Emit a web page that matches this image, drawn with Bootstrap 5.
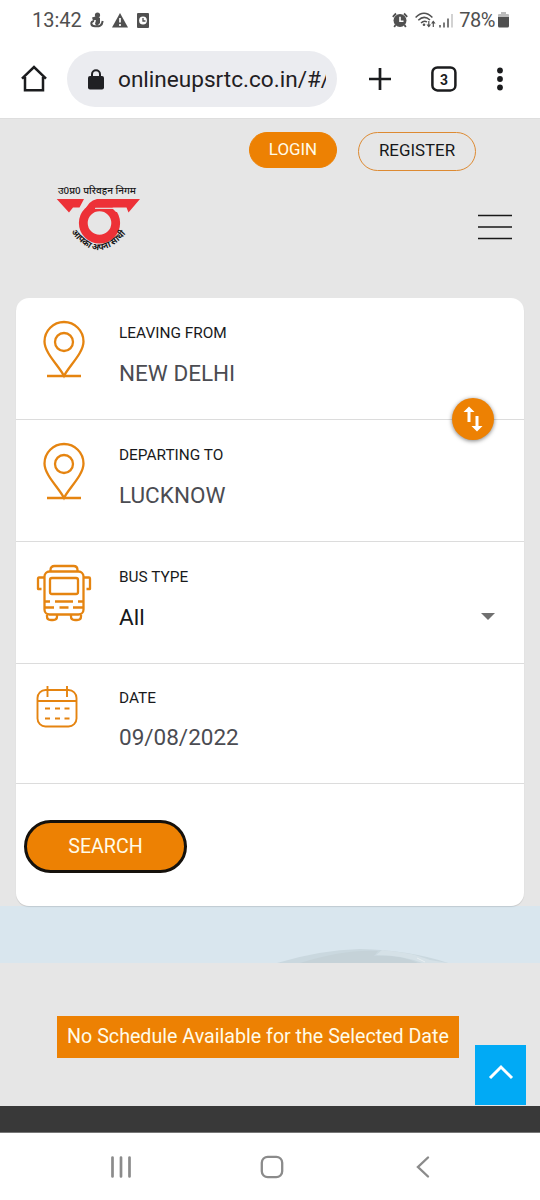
<!DOCTYPE html>
<html lang="en">
<head>
<meta charset="utf-8">
<meta name="viewport" content="width=device-width, initial-scale=1">
<title>UPSRTC Online Booking</title>
<link href="https://cdn.jsdelivr.net/npm/bootstrap@5.3.0/dist/css/bootstrap.min.css" rel="stylesheet">
<style>
  :root { --brand: #ed8103; --page: #e6e6e6; }
  body { font-family: Roboto, "Noto Sans", sans-serif; color: #191a1c; background: #fff; }
  svg { display: block; flex: none; overflow: visible; }
  .status-bar { height: 40px; padding-left: 32px; padding-right: 30px; font-size: 20px; line-height: 24px; color: #505050; }
  .browser-bar { height: 78px; padding-left: 20px; padding-right: 20px; }
  .address { width: 270px; height: 56px; margin-left: 19px; background: #ebecf0; padding-left: 20px; }
  .address-text { width: 208px; margin-left: 13px; padding-top: 2px; font-size: 22.6px; line-height: 30px; white-space: nowrap; overflow: hidden; color: #1f2023; }
  .page-body { height: 988px; background: var(--page); border-top: 1px solid #dedede; }
  .account-links { height: 54px; padding: 13px 64px 0 0; gap: 21px; }
  .pill-btn { --bs-btn-border-radius: 30px; --bs-btn-padding-x: 0; --bs-btn-padding-y: 0; font-size: 16.9px; border-width: 1px; }
  .login-btn { width: 88px; height: 36px; background: var(--brand); border-color: var(--brand); color: #fffbe8; padding-bottom: 1px; }
  .register-btn { width: 118px; height: 39px; border-color: #dd8a32; color: #17181a; padding-bottom: 1px; }
  .site-head { height: 125px; padding: 9px 28px 0 54px; }
  .booking { width: 508px; height: 608px; margin-left: 16px; border-radius: 13px; background: #fff; position: relative; z-index: 1; box-shadow: 0 1px 1px rgba(0,0,0,.12); }
  .field { height: 122px; border-bottom: 1px solid #dcdcdc; }
  .field-date { height: 120px; }
  .field-icon { width: 103px; padding-left: 20px; padding-top: 22px; }
  .field-label { font-size: 15.4px; line-height: 20px; margin-top: 25px; }
  .field-value { font-size: 22.5px; line-height: 30px; margin-top: 15px; color: #4b4c52; }
  .swap { position: absolute; left: 436px; top: 100px; width: 42px; height: 42px; background: var(--brand); box-shadow: 0 1px 4px rgba(0,0,0,.5); }
  .search-btn { width: 163px; height: 53px; margin: 36px 0 0 8px; --bs-btn-border-radius: 27px; border: 3px solid #15110c; background: var(--brand); color: #fffbe8; font-size: 19.6px; padding: 0; }
  .banner { height: 57px; background: #d9e6ee; }
  .message-area { height: 142px; padding-top: 53px; position: relative; }
  .message { width: 402px; height: 42px; margin-left: 57px; font-size: 19.65px; background: var(--brand); color: #fffbe8; white-space: nowrap; }
  .to-top { position: absolute; right: 14px; bottom: 0; width: 51px; height: 60px; background: #01aaf5; }
  .footer-strip { height: 27px; background: #393939; border-bottom: 1px solid #777; }
  .system-nav { height: 67px; }
</style>
</head>
<body>
<div class="status-bar d-flex align-items-center">
  <span>13:42</span>
  <svg width="14" height="16" viewBox="0 0 14 16" style="margin-left:8px"><g fill="#505050"><circle cx="7.500" cy="3" r="2.600"/><path d="M2 5.500l5-1.500 3 2v5L7 14l-2-2 1-4-3 .5z"/></g><path d="M4 9C0 9.500.5 14 5 14.300S12 14 12.700 9" fill="none" stroke="#505050" stroke-width="2"/></svg>
  <svg width="16" height="15" viewBox="0 0 16 15" style="margin-left:8px"><path d="M8 0l8 14.500H0z" fill="#505050"/><path d="M8 5v4.500M8 11v2" stroke="#fff" stroke-width="1.700"/></svg>
  <svg width="12" height="15" viewBox="0 0 12 15" style="margin-left:9px"><rect width="12" height="15" rx="1" fill="#505050"/><circle cx="6" cy="7.500" r="3.900" fill="#fff"/><path d="M6 5v3h2.500" fill="none" stroke="#505050" stroke-width="1.300"/></svg>
  <svg class="ms-auto" width="16" height="16" viewBox="0 0 16 16"><circle cx="8" cy="8.500" r="6.500" fill="#505050"/><path d="M.8 4.800L4 1.500M15.200 4.800L12 1.500M3.500 13l-1.300 2M12.500 13l1.300 2" stroke="#505050" stroke-width="1.800"/><path d="M8 4.800v4.500h3.500" fill="none" stroke="#fff" stroke-width="1.600"/></svg>
  <svg width="21" height="17" viewBox="0 0 21 17" style="margin-left:7px"><g fill="none" stroke="#505050" stroke-width="1.500"><path d="M.6 5.500Q9 -3 17.400 5.500M3.300 8.300Q9 2.600 15 8M6 11Q9 8 12 10"/><path d="M13.800 9v5.500M18.300 15V9.500" stroke-width="1.200"/></g><circle cx="9" cy="12.800" r="1.300" fill="#505050"/><path d="M11.500 12.500h4.600l-2.300 3zM16 11.500h4.600l-2.300-3z" fill="#505050"/></svg>
  <svg width="14" height="15" viewBox="0 0 14 15" style="margin-left:3px"><path d="M1 12v2.500M5 9.500v5M9 5.500v9" stroke="#505050" stroke-width="1.500"/><path d="M13 1v13.500" stroke="#c3c3c3" stroke-width="1.500"/></svg>
  <span style="margin-left:6px;letter-spacing:-.5px">78%</span>
  <svg width="11" height="16" viewBox="0 0 11 16" style="margin-left:3px;margin-right:1px"><path d="M0 3q0-1 1-1h2V0h5v2h2q1 0 1 1v3H0z" fill="#bcbcbc"/><path d="M0 5h11v9q0 1.500-1.500 1.500h-8Q0 15.500 0 14z" fill="#505050"/></svg>
</div>

<header class="browser-bar d-flex align-items-center">
  <svg width="28" height="28" viewBox="0 0 28 28"><path d="M2 13.700L14 2l12 11.700M5 12v13.200h18V12" fill="none" stroke="#1b1c1e" stroke-width="2.500"/></svg>
  <div class="address rounded-pill d-flex align-items-center">
    <svg width="18" height="21" viewBox="0 0 18 21"><rect x="1" y="7" width="16" height="13.500" rx="2" fill="#202124"/><path d="M5 8V5.200a4 4 0 018 0V8" fill="none" stroke="#202124" stroke-width="2"/></svg>
    <div class="address-text">onlineupsrtc.co.in/#/</div>
  </div>
  <svg width="24" height="24" viewBox="0 0 24 24" style="margin-left:31px"><path d="M12 1v22M1 12h22" stroke="#1b1c1e" stroke-width="2.700"/></svg>
  <svg width="26" height="26" viewBox="0 0 26 26" style="margin-left:39px"><rect x="1.400" y="1.400" width="23" height="23" rx="5" fill="none" stroke="#1b1c1e" stroke-width="2.500"/><text x="13" y="18.500" text-anchor="middle" font-size="15.500" font-weight="700" font-family="Roboto, sans-serif" textLength="8" lengthAdjust="spacingAndGlyphs" fill="#1b1c1e">3</text></svg>
  <svg width="6" height="24" viewBox="0 0 6 24" style="margin-left:40px" fill="#1b1c1e"><circle cx="3" cy="3.500" r="2.900"/><circle cx="3" cy="12" r="2.900"/><circle cx="3" cy="20.500" r="2.900"/></svg>
</header>

<main class="page-body">
  <nav class="account-links d-flex justify-content-end align-items-start">
    <button class="btn pill-btn login-btn">LOGIN</button>
    <button class="btn pill-btn register-btn">REGISTER</button>
  </nav>
  <div class="site-head d-flex align-items-start justify-content-between">
    <svg width="90" height="72" viewBox="0 0 90 72" font-family="'Noto Sans Devanagari','Noto Sans',sans-serif" fill="#171717">
      <text x="4" y="11.500" font-size="9.700" font-weight="500" textLength="78" lengthAdjust="spacingAndGlyphs">उ0प्र0 परिवहन निगम</text>
      <circle cx="45.500" cy="41" r="16.200" fill="none" stroke="#ed3137" stroke-width="8.800"/>
      <path d="M41 26.200H72" stroke="#e6e6e6" stroke-width="1.400"/>
      <g fill="#ed3137"><path d="M2.700 17H30L25.500 25.500H19L15 30.500Z"/><path d="M43 17H86L74.500 30.500L72.500 25.500H42L31 29Q34 19 43 17Z"/></g>
      <path d="M58 25.900H70L67 30H62Z" fill="#e6e6e6"/>
      <path id="motto" d="M17 50Q44 86 73 50" fill="none"/>
      <text font-size="9" font-weight="700"><textPath href="#motto" textLength="67" lengthAdjust="spacingAndGlyphs">आपका अपना साथी</textPath></text>
    </svg>
    <svg width="34" height="26" viewBox="0 0 34 26" style="margin-top:32px"><path d="M0 1.500h34M0 13h34M0 24.500h34" stroke="#191919" stroke-width="1.400"/></svg>
  </div>

  <section class="booking">
    <div class="field d-flex">
      <div class="field-icon"><svg width="56" height="58" viewBox="0 0 56 58" fill="none" stroke="#e58410" stroke-width="2.300"><path d="M28 56C23 46 8.500 33 8.500 21.500a19.500 19.500 0 0139 0C47.500 33 33 46 28 56ZM11 56h34"/><circle cx="28" cy="22" r="9"/></svg></div>
      <div><div class="field-label">LEAVING FROM</div><div class="field-value">NEW DELHI</div></div>
    </div>
    <div class="field d-flex">
      <div class="field-icon"><svg width="56" height="58" viewBox="0 0 56 58" fill="none" stroke="#e58410" stroke-width="2.300"><path d="M28 56C23 46 8.500 33 8.500 21.500a19.500 19.500 0 0139 0C47.500 33 33 46 28 56ZM11 56h34"/><circle cx="28" cy="22" r="9"/></svg></div>
      <div><div class="field-label">DEPARTING TO</div><div class="field-value">LUCKNOW</div></div>
    </div>
    <div class="field d-flex">
      <div class="field-icon"><svg width="56" height="58" viewBox="0 0 56 58" fill="none" stroke="#e58410" stroke-width="2.300" stroke-linejoin="round"><rect x="8.500" y="7.500" width="39" height="43" rx="5"/><path d="M14.500 7.500V6q0-4 4-4h19q4 0 4 4v1.500M8.500 13.500H3q-1 0-1 1V25h3.500M47.500 13.500H53q1 0 1 1V25h-3.500M11 50.500v2q0 3.500 4 3.500h2q4 0 4-3.500v-2M35 50.500v2q0 3.500 4 3.500h2q4 0 4-3.500v-2"/><rect x="14" y="14" width="28" height="16" rx="2"/><path d="M9 37.500h5M19 37.500h18M42 37.500h5M9 43.500h9M23.500 43.500h9M37 43.500h10"/></svg></div>
      <div><div class="field-label">BUS TYPE</div><div class="field-value" style="color:#17181a">All</div></div>
      <svg class="ms-auto" width="14" height="7" viewBox="0 0 14 7" style="margin-top:71px;margin-right:29px"><path d="M0 0h14L7 7z" fill="#707070"/></svg>
    </div>
    <div class="field field-date d-flex">
      <div class="field-icon"><svg width="42" height="42" viewBox="0 0 42 42" fill="none" stroke="#e58410" stroke-width="1.900"><rect x="1.500" y="4" width="39" height="36.500" rx="8"/><path d="M1.500 15h39M11.500 0v11M31 0v11"/><path d="M9 22.500h5M19 22.500h5M28.500 22.500h5M9 32.500h5M19 32.500h5M28.500 32.500h5" stroke-width="2"/></svg></div>
      <div><div class="field-label" style="margin-top:24px">DATE</div><div class="field-value" style="margin-top:14px">09/08/2022</div></div>
    </div>
    <button class="btn search-btn">SEARCH</button>
    <div class="swap rounded-circle d-flex align-items-center justify-content-center">
      <svg width="20" height="26" viewBox="0 0 20 26" fill="none" stroke="#fff" stroke-width="3"><path d="M6 16V4M14 10v12"/><path d="M6 .5L11.500 6H.5zM14 25.500L8.500 20h11z" fill="#fff" stroke="none"/></svg>
    </div>
  </section>
  <div class="banner">
    <svg width="540" height="57" viewBox="0 0 540 57"><path d="M277 57Q320 44 360 43Q410 44 448 57Z" fill="#cad8df"/><path d="M300 57Q345 43 378 45L374 50Q400 48 418 57Z" fill="#c5d2d8"/><path d="M376 49L382 44Q410 46 430 54L448 57H422Q402 49 376 49Z" fill="#d5e1e7"/><path d="M417 52l8 4" stroke="#e8eff2"/></svg>
  </div>
  <div class="message-area">
    <div class="message d-flex align-items-center justify-content-center">No Schedule Available for the Selected Date</div>
    <div class="to-top d-flex justify-content-center"><svg width="24" height="14" viewBox="0 0 24 14" style="margin-top:20px"><path d="M1 13L12 2l11 11" fill="none" stroke="#fff" stroke-width="3"/></svg></div>
  </div>
</main>
<div class="footer-strip"></div>
<nav class="system-nav d-flex align-items-center">
  <svg width="22" height="22" viewBox="0 0 22 22" style="margin-left:110px"><path d="M2.500 1.500v19M11 1.500v19M19.500 1.500v19" stroke="#8b8b8b" stroke-width="2.700" stroke-linecap="round"/></svg>
  <svg width="24" height="24" viewBox="0 0 24 24" style="margin-left:128px"><rect x="1.800" y="1.800" width="20.400" height="20.400" rx="6" fill="none" stroke="#8b8b8b" stroke-width="2.300"/></svg>
  <svg width="14" height="22" viewBox="0 0 14 22" style="margin-left:132px"><path d="M12 1.500L2 11l10 9.500" fill="none" stroke="#8b8b8b" stroke-width="2.400" stroke-linecap="round"/></svg>
</nav>
<script src="https://cdn.jsdelivr.net/npm/bootstrap@5.3.0/dist/js/bootstrap.bundle.min.js"></script>
</body>
</html>
